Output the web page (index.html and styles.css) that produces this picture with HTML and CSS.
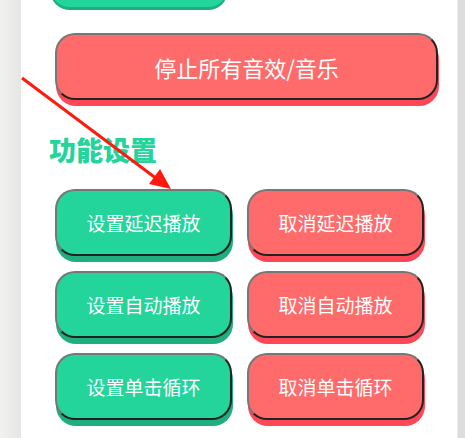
FILE: index.html
```html
<!DOCTYPE html>
<html lang="zh-CN">
<head>
  <meta charset="UTF-8">
  <meta name="viewport" content="width=device-width, initial-scale=1.0">
  <title>音效设置</title>
  <link rel="stylesheet" href="styles.css">
</head>
<body>
  <div class="page">
    <div class="side side-left"></div>
    <div class="panel">
      <button class="btn btn-green btn-top" aria-label="播放"></button>
      <button class="btn btn-red btn-wide">停止所有音效/音乐</button>
      <h2 class="section-title">功能设置</h2>
      <div class="btn-grid">
        <button class="btn btn-green">设置延迟播放</button>
        <button class="btn btn-red">取消延迟播放</button>
        <button class="btn btn-green">设置自动播放</button>
        <button class="btn btn-red">取消自动播放</button>
        <button class="btn btn-green">设置单击循环</button>
        <button class="btn btn-red">取消单击循环</button>
      </div>
    </div>
    <div class="side side-right"></div>
  </div>

  <!-- annotation arrow drawn over the screenshot -->
  <svg class="mark" width="465" height="438" viewBox="0 0 465 438">
    <line x1="22" y1="78" x2="157" y2="179" stroke="#ff1a0f" stroke-width="3"/>
    <polygon points="171,189 160,169 149,184" fill="#ff1a0f"/>
  </svg>
</body>
</html>
```

FILE: styles.css
```css
body {
  margin: 0;
  padding: 0;
  font-family: "Noto Sans CJK SC", "Noto Sans", sans-serif;
  background: #fff;
  overflow: hidden;
}
.page {
  display: flex;
  height: 438px;
}
.side-left {
  width: 21px;
  background: linear-gradient(to right, #f2f2f1, #e5e6e4);
}
.side-right {
  width: 7px;
  background: #dddddd;
  border-left: 1px solid #ececec;
}
.panel {
  width: 436px;
  padding-left: 34px;
  box-sizing: border-box;
  background: #fff;
}
.btn {
  display: block;
  height: 67px;
  border: 2px solid;
  border-color: #777 #222 #222 #777;
  border-radius: 20px;
  color: #fff;
  font-family: inherit;
  font-size: 19px;
  padding: 0;
  cursor: pointer;
}
.btn-green {
  background-color: #23d49b;
  box-shadow: 1px 6px 0 #1fae80;
}
.btn-red {
  background-color: #ff6b6b;
  box-shadow: 1px 6px 0 #ff4757;
}
.btn-top {
  width: 178px;
  margin: -60px 0 0 -5px;
  border: none;
  box-shadow: 0 3px 0 #1fae80;
}
.btn-wide {
  width: 383px;
  margin-top: 26px;
  font-size: 22px;
}
.section-title {
  margin: 32px 0 21px -6px;
  font-size: 27px;
  line-height: 36px;
  font-weight: 900;
  color: #23d49b;
}
.btn-grid {
  display: grid;
  grid-template-columns: 177px 177px;
  grid-auto-rows: 67px;
  gap: 15px;
}
.btn-grid .btn {
  width: 177px;
}
.mark {
  position: absolute;
  left: 0;
  top: 0;
  pointer-events: none;
}
```
